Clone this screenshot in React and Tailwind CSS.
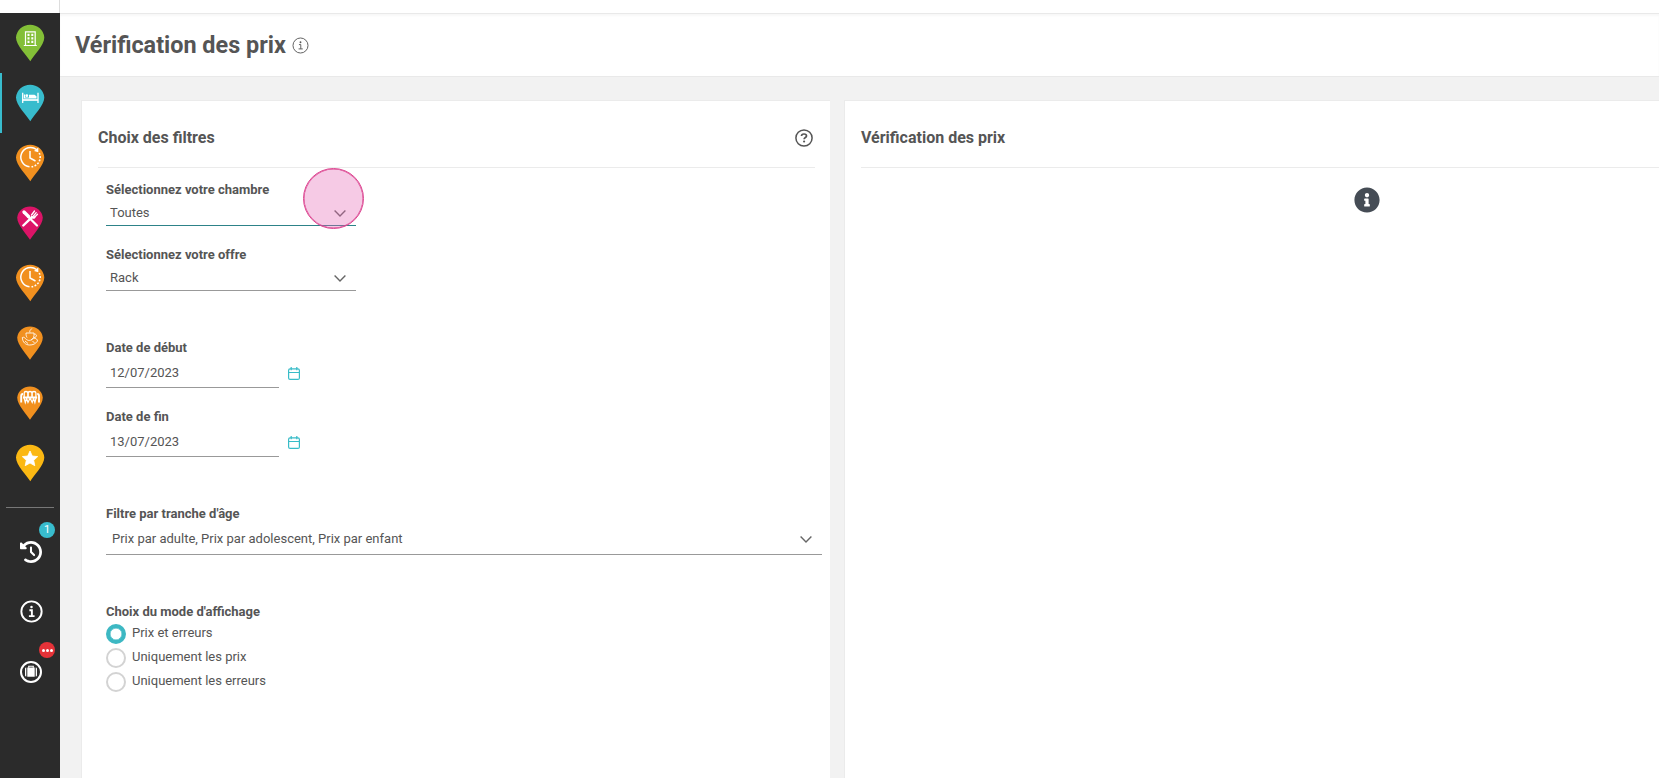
import { FaInfoCircle } from "react-icons/fa";
import { FaClockRotateLeft } from "react-icons/fa6";

function Pin({ color, small, children }) {
  return (
    <svg viewBox="0 0.5 60 60" className="w-[60px] h-[60px]">
      <path
        fill={color}
        d={
          small
            ? "M30 47.300C27 42 17.200 32.500 17.200 25A12.900 12.700 0 0 1 42.800 25C42.800 32.500 33 42 30 47.300Z"
            : "M30.300 48.800C27 43 16 33 16 25A14.200 14 0 0 1 44.300 25C44.300 33 33.500 43 30.300 48.800Z"
        }
      />
      {children}
    </svg>
  );
}

function HotelGlyph() {
  return (
    <g>
      <path
        fill="none"
        stroke="#fff"
        strokeWidth="1.200"
        d="M25.500 32.500V19.300H35.200V32.500M23.800 33H36.800"
      />
      <path
        fill="none"
        stroke="#fff"
        strokeWidth="2"
        strokeDasharray="2.200 1.300"
        d="M28.500 21.200V31.500M32.300 21.200V31.500"
      />
    </g>
  );
}

function BedGlyph() {
  return (
    <g fill="none" stroke="#fff">
      <path strokeWidth="1.300" d="M22.700 20.200V30.500M38 20.200V30.500" />
      <path strokeWidth="1.700" d="M22.700 27.500H38" />
      <path strokeWidth="1.200" d="M24.500 22V25.500H29" />
      <circle cx="26.800" cy="23.200" r="1.400" fill="#fff" stroke="none" />
      <path
        fill="#fff"
        stroke="none"
        d="M29 22.300H34.500L36.500 23.800V26H29Z"
      />
    </g>
  );
}

function ClockGlyph() {
  return (
    <g fill="none" stroke="#fff" strokeWidth="1.500">
      <path d="M36.500 17A9.700 9.700 0 1 0 29.500 34.300" />
      <path
        strokeWidth="1.600"
        strokeDasharray="1.800 1.500"
        d="M31.500 34.300A9.700 9.700 0 0 0 39 20"
      />
      <path d="M30 18.500V25.500L35.500 28.500" />
      <path fill="#fff" stroke="none" d="M34 18.500L38.300 15L38.300 19.700Z" />
    </g>
  );
}

function CutleryGlyph() {
  return (
    <g stroke="#fff" strokeLinecap="round" fill="none">
      <path strokeWidth="3.400" d="M24 19.500L28.500 24" />
      <path strokeWidth="2.200" d="M28 24L37 33" />
      <path strokeWidth="2.400" d="M23.300 33L32 24.700" />
      <path
        strokeWidth="1.300"
        d="M31.500 22.500L34.500 18.500M33 24L36.200 20.200M34.300 25L37.500 21.800"
      />
      <path strokeWidth="2" d="M31.700 24.500Q33.200 26 34.500 24.700" />
    </g>
  );
}

function BreakfastGlyph() {
  return (
    <g fill="none" stroke="#fff" strokeWidth="1" strokeOpacity="0.850">
      <path d="M26 20.500H34C34.300 24 33.500 26.500 31 27.500M26 20.500C26 22.500 26.300 24 27 25" />
      <path d="M34.200 21.500C37.500 21.500 37 25 33.800 25.300" />
      <path d="M22.300 25C24 24 25.300 26 26.500 27C29 29 32 27.500 33.500 25.500C36 25.500 37.500 27 37.500 28.500C35.500 31.500 33 32.500 29.500 32.500C25.500 32.500 22.500 29.500 22.300 25Z" />
      <path d="M30 20C29 18 30.800 17.500 31.800 16M25 28.500L28 31M32.500 28.500L34.500 30.500" />
    </g>
  );
}

function MeetingGlyph() {
  return (
    <g fill="none" stroke="#fff">
      <path
        strokeWidth="1.300"
        d="M24.200 24.500V20.500Q24.200 19 26 19T27.800 20.500V24.500M28.200 24.500V20.500Q28.200 19 30 19T31.900 20.500V24.500M32.200 24.500V20.500Q32.200 19 34 19T35.900 20.500V24.500"
      />
      <path strokeWidth="2" d="M23 25H37.200" />
      <path
        strokeWidth="1.900"
        d="M21.200 30V23.500Q21.200 21.500 23 21.500M39 30V23.500Q39 21.500 37.200 21.500"
      />
      <path
        strokeWidth="1.200"
        d="M24 25L25.300 30L26.600 26L28 30L30.100 25.500L32.200 30L33.600 26L34.900 30L36.200 25"
      />
    </g>
  );
}

function StarGlyph() {
  return (
    <path
      fill="#fff"
      stroke="#fff"
      strokeWidth="0.800"
      strokeLinejoin="round"
      d="M30 18.500L32.300 23.500L37.700 24.100L33.700 27.800L34.800 33.200L30 30.500L25.200 33.200L26.300 27.800L22.300 24.100L27.700 23.500Z"
    />
  );
}

function InfoIcon({ className, stroke }) {
  return (
    <svg viewBox="0 0 24 24" className={className} fill="none" stroke="currentColor">
      <circle cx="12" cy="12" r="10.600" strokeWidth={stroke} />
      <circle cx="12" cy="7.400" r="1.300" fill="currentColor" stroke="none" />
      <path strokeWidth={stroke} d="M9.800 10.700H12.400V16.700M9.300 16.800H15.200" />
    </svg>
  );
}

function SuitcaseIcon() {
  return (
    <svg viewBox="0 0 24 24" className="w-6 h-6" fill="none" stroke="#fff">
      <circle cx="12" cy="12" r="10" strokeWidth="2" />
      <path
        fill="#fff"
        stroke="none"
        d="M6 8.800Q6 7.500 7.300 7.500V16.500Q6 16.500 6 15.200ZM18 8.800Q18 7.500 16.700 7.500V16.500Q18 16.500 18 15.200ZM8.300 7.500H15.700V16.800H8.300Z"
      />
      <path strokeWidth="1.100" d="M9.700 7.800V6.300H14.300V7.800" />
    </svg>
  );
}

function HelpIcon() {
  return (
    <svg viewBox="0 0 18 18" className="w-[18px] h-[18px]" fill="none" stroke="currentColor">
      <circle cx="9" cy="9" r="8.100" strokeWidth="1.500" />
      <path
        strokeWidth="1.700"
        d="M6.500 7.100C6.500 5.700 7.600 5 9 5S11.500 5.700 11.500 6.900C11.500 8.500 9.100 8.400 9.100 10.200"
      />
      <circle cx="9.100" cy="12.500" r="1.100" fill="currentColor" stroke="none" />
    </svg>
  );
}

function Chevron() {
  return (
    <svg viewBox="0 0 12 7" className="w-3 h-[7px]" fill="none">
      <path stroke="#666" strokeWidth="1.400" d="M0.600 0.600L6 6L11.400 0.600" />
    </svg>
  );
}

function CalendarIcon() {
  return (
    <svg viewBox="0 0 12 13" className="w-3 h-[13px]" fill="none" stroke="#38bcc8">
      <rect x="0.600" y="1.900" width="10.800" height="10.500" rx="1.500" strokeWidth="1.200" />
      <path strokeWidth="1.200" d="M0.600 5.500H11.400M3.200 0V3.200M8.800 0V3.200" />
    </svg>
  );
}

const places = [
  { color: "#83bf37", glyph: <HotelGlyph /> },
  { color: "#38bccd", glyph: <BedGlyph />, active: true },
  { color: "#f1901f", glyph: <ClockGlyph /> },
  { color: "#dc1467", glyph: <CutleryGlyph />, small: true },
  { color: "#f1901f", glyph: <ClockGlyph /> },
  { color: "#f1901f", glyph: <BreakfastGlyph />, small: true },
  { color: "#f1901f", glyph: <MeetingGlyph />, small: true },
  { color: "#fbb813", glyph: <StarGlyph /> },
];

const dates = [
  { label: "Date de début", value: "12/07/2023" },
  { label: "Date de fin", value: "13/07/2023" },
];

const modes = ["Prix et erreurs", "Uniquement les prix", "Uniquement les erreurs"];

function Sidebar() {
  return (
    <aside className="w-[60px] shrink-0 bg-[#2b2b2b] text-white">
      {places.map((place, index) => (
        <div
          key={index}
          className={
            place.active
              ? "h-[60px] border-l-2 border-[#38bccd]"
              : "h-[60px]"
          }
        >
          <div className={place.active ? "-ml-0.5" : ""}>
            <Pin color={place.color} small={place.small}>
              {place.glyph}
            </Pin>
          </div>
        </div>
      ))}
      <hr className="mx-1.5 mt-3.5 mb-3.5 border-[#777]" />
      <div className="relative flex h-[60px] items-center justify-center pl-0.5">
        <FaClockRotateLeft className="w-[22px] h-[22px]" />
        <span className="absolute top-0 right-[5px] flex h-4 w-4 items-center justify-center rounded-full bg-[#38bccd] text-[11px]">
          1
        </span>
      </div>
      <div className="flex h-[60px] items-center justify-center pl-0.5 pb-px">
        <InfoIcon className="w-[23px] h-[23px]" stroke="2" />
      </div>
      <div className="relative flex h-[60px] items-center justify-center pl-0.5">
        <SuitcaseIcon />
        <span className="absolute top-0 right-[5px] flex h-4 w-4 items-center justify-center gap-px rounded-full bg-[#e53238]">
          <i className="h-[3px] w-[3px] rounded-full bg-white"></i>
          <i className="h-[3px] w-[3px] rounded-full bg-white"></i>
          <i className="h-[3px] w-[3px] rounded-full bg-white"></i>
        </span>
      </div>
    </aside>
  );
}

function SelectField({ label, value, active }) {
  return (
    <div className="w-[250px]">
      <p className="h-5 font-bold">{label}</p>
      <div
        className={
          active
            ? "relative flex h-[26px] items-center justify-between border-b border-[#2d8288] pt-px pr-2.5 pl-1"
            : "flex h-[26px] items-center justify-between border-b border-[#999] pt-px pr-2.5 pl-1"
        }
      >
        <span>{value}</span>
        <Chevron />
        {active && (
          <span className="absolute -top-[32px] -right-[8px] h-[61px] w-[61px] rounded-full border border-[#dc4590] bg-[#e667b5]/35 shadow-[inset_0_0_0_0.5px_#dc4590]"></span>
        )}
      </div>
    </div>
  );
}

function Filters() {
  return (
    <section className="w-[749px] shrink-0 border-t border-l border-[#ebebeb] bg-white pr-[15px] pl-4">
      <div className="flex h-[67px] items-center justify-between border-b border-[#ebebeb] pt-[7px] pr-0.5">
        <h2 className="text-base font-bold">Choix des filtres</h2>
        <HelpIcon />
      </div>
      <div className="-mr-[7px] ml-2 pt-3 text-[13px] leading-5">
        <SelectField label="Sélectionnez votre chambre" value="Toutes" active />
        <div className="mt-[19px]">
          <SelectField label="Sélectionnez votre offre" value="Rack" />
        </div>
        <div className="mt-[47px] flex flex-col gap-[19px]">
          {dates.map((date) => (
            <div key={date.label}>
              <p className="h-5 font-bold">{date.label}</p>
              <div className="flex items-center gap-[9px]">
                <div className="h-[30px] w-[173px] border-b border-[#999] pt-[5px] pl-1">
                  {date.value}
                </div>
                <CalendarIcon />
              </div>
            </div>
          ))}
        </div>
        <div className="mt-[47px]">
          <p className="h-5 font-bold">Filtre par tranche d'âge</p>
          <div className="flex h-[31px] items-center justify-between border-b border-[#999] pr-2.5 pl-1.5">
            <span>Prix par adulte, Prix par adolescent, Prix par enfant</span>
            <Chevron />
          </div>
        </div>
        <div className="mt-[47px]">
          <p className="h-[22px] font-bold">Choix du mode d'affichage</p>
          {modes.map((mode, index) => (
            <div key={mode} className="flex h-6 items-start gap-1.5">
              <span
                className={
                  index === 0
                    ? "h-5 w-5 rounded-full border-4 border-[#3db8c3] shadow-[inset_0_0_0_0.5px_#3db8c3]"
                    : "h-5 w-5 rounded-full border-2 border-[#d3d3d3]"
                }
              ></span>
              <span className="-mt-px">{mode}</span>
            </div>
          ))}
        </div>
      </div>
    </section>
  );
}

function Results() {
  return (
    <section className="flex-1 border-t border-l border-[#ebebeb] bg-white pl-4">
      <div className="flex h-[67px] items-center border-b border-[#ebebeb] pt-[7px]">
        <h2 className="text-base font-bold">Vérification des prix</h2>
      </div>
      <div className="flex justify-center pt-[19px] pl-[213px]">
        <FaInfoCircle className="h-[26px] w-[26px] text-[#454c55]" />
      </div>
    </section>
  );
}

function App() {
  return (
    <div className="flex h-screen flex-col overflow-hidden bg-white font-['Roboto',sans-serif] text-[#555]">
      <div className="flex h-[13px] shrink-0">
        <div className="w-[60px] border-r border-[#ddd]"></div>
      </div>
      <div className="flex min-h-0 flex-1">
        <Sidebar />
        <main className="flex min-w-0 flex-1 flex-col bg-[#f2f2f2]">
          <header className="flex h-[64px] shrink-0 items-center gap-1.5 border-t border-b border-[#e9e9e9] bg-white pl-[15px] shadow-[inset_0_2px_2px_rgba(0,0,0,0.03)]">
            <h1 className="pt-0.5 text-[23.4px] font-bold">Vérification des prix</h1>
            <InfoIcon className="w-[17px] h-[17px]" stroke="1.300" />
          </header>
          <div className="flex min-h-0 flex-1 gap-[14px] pt-[23px] pl-[21px]">
            <Filters />
            <Results />
          </div>
        </main>
      </div>
    </div>
  );
}

export default App;
